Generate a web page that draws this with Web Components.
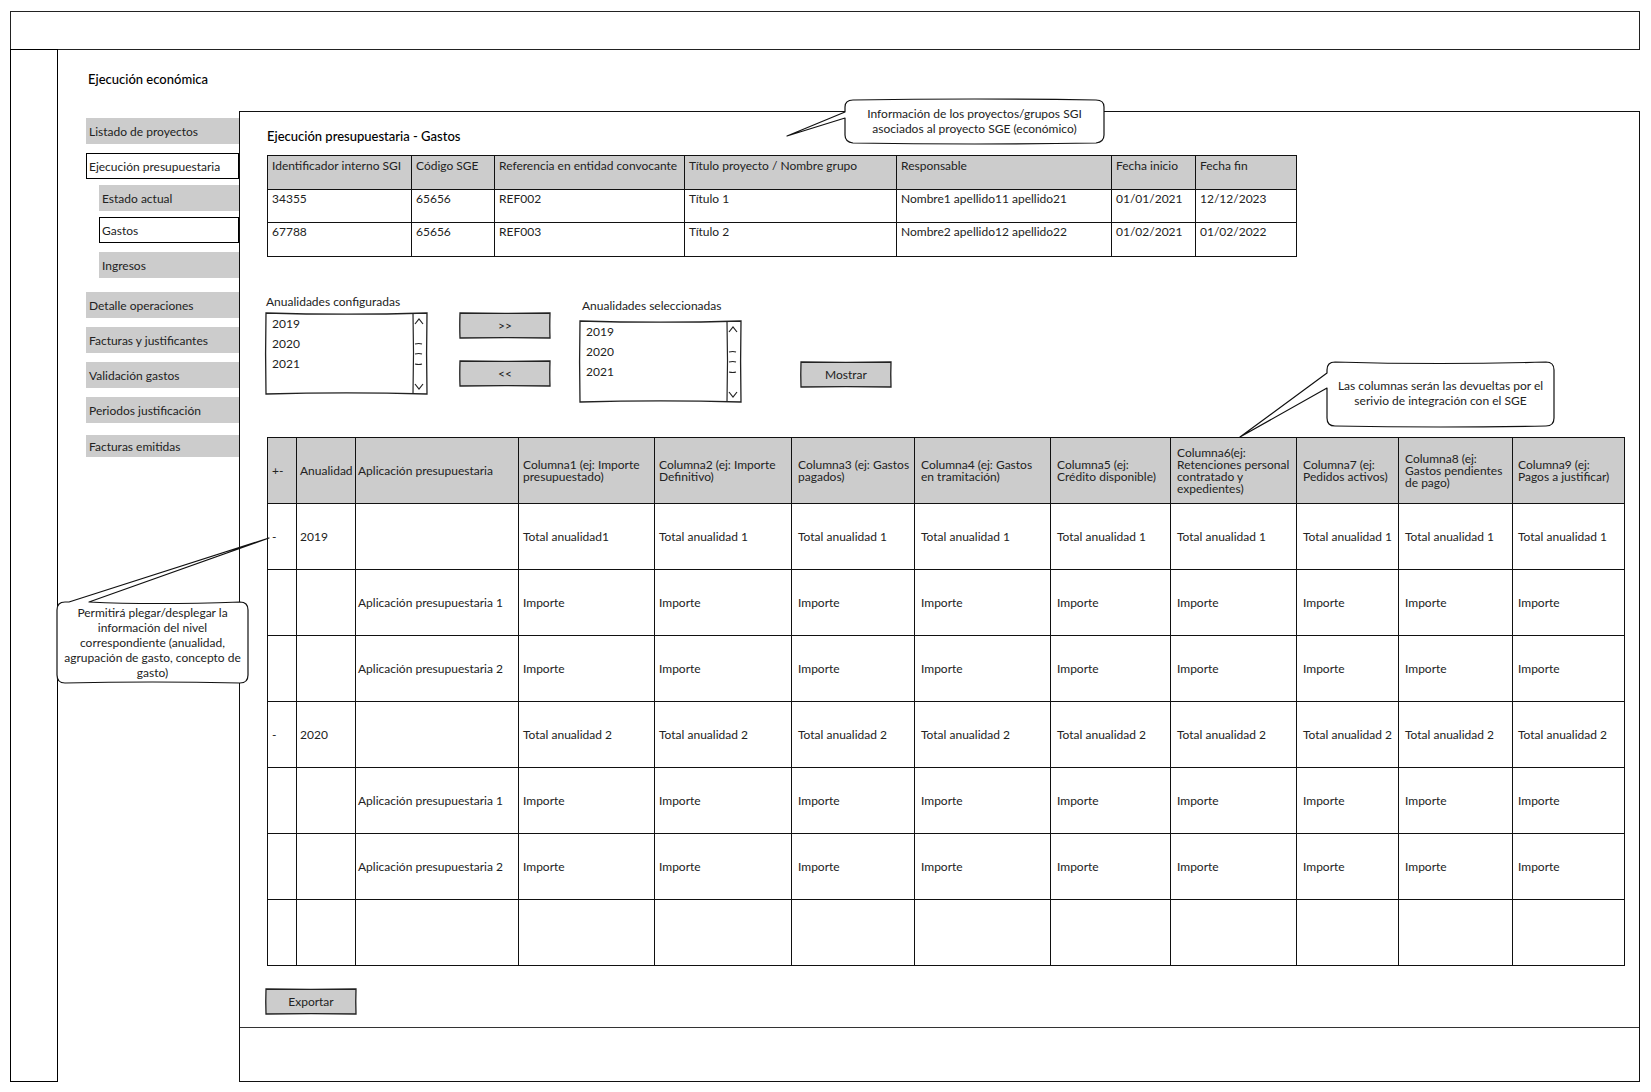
<!DOCTYPE html>
<html lang="es">
<head>
<meta charset="utf-8">
<title>Ejecución económica</title>
<style>
body{margin:0;background:#fff;color:#222;font:12px/15px Lato,"Liberation Sans",sans-serif}
</style>
</head>
<body>
<economic-app></economic-app>
<script>
const define=(name,html,setup)=>customElements.define(name,class extends HTMLElement{
  constructor(){super();this.attachShadow({mode:'open'}).innerHTML='<style>*,:host{box-sizing:border-box}</style>'+html;}
  connectedCallback(){if(setup)setup(this,this.shadowRoot);}
});

/* Hand-drawn frame whose top and bottom edges sag slightly */
const sketchFrame=`<svg class="frame" viewBox="0 0 100 100" preserveAspectRatio="none" aria-hidden="true"><path d="M0 0Q50 3 100 0Q99.5 50 100 100Q50 97 0 100Q-.5 50 0 0Z" vector-effect="non-scaling-stroke"/></svg>`;
const frameCss=`.frame{position:absolute;inset:0;width:100%;height:100%;overflow:visible;z-index:-1}.frame path{fill:var(--fill,#fff);stroke:#222;stroke-width:1.3}`;

define('sketch-button',`<style>
:host{display:block;width:90px;height:25px}
button{position:relative;z-index:0;width:100%;height:100%;border:0;padding:0;background:none;font:inherit;color:inherit;--fill:#ccc}
${frameCss}</style><button type="button">${sketchFrame}<slot></slot></button>`);

define('year-list',`<style>
:host{display:block;width:161px}
label{display:block;line-height:16px;margin-bottom:var(--label-gap,3px);padding-left:var(--label-inset,0)}
.box{position:relative;z-index:0;display:flex;height:81px}
select{flex:1;min-width:0;border:0;outline:0;padding:3px 0 0;background:none;font:inherit;color:inherit;overflow:hidden;scrollbar-width:none;appearance:none}
select::-webkit-scrollbar{display:none}
option{height:20px;line-height:20px;min-height:20px;padding:0 0 0 6px}
.bar{width:14px;height:81px;flex:none;overflow:visible}
.bar path{fill:none;stroke:#222;stroke-width:1.2}
${frameCss}</style>
<label for="years"></label>
<div class="box">${sketchFrame}<select id="years" multiple size="3"><option>2019</option><option>2020</option><option>2021</option></select>
<svg class="bar" viewBox="0 0 14 81" aria-hidden="true"><path d="M0 0Q1 40 0 81M2 11L6 6L10 11M2 31Q6 30 9 31M2 41Q6 40 9 41M2 51Q6 52 9 51M2 71L6 76L10 71"/></svg></div>`,
(h,r)=>{r.querySelector('label').textContent=h.getAttribute('label');});

define('nav-item',`<style>
:host{display:block}
a{display:flex;align-items:center;height:var(--h,26px);padding-left:3px;background:#ccc;color:inherit;text-decoration:none}
:host([current]) a{background:#fff;border:1px solid #000}
:host([current]) a{padding-left:2px}
:host([short]){--h:22px}
</style><a href="#"><slot></slot></a>`);

define('side-nav',`<style>
:host{display:block;padding-left:28px}
h1{margin:0;height:18px;font-size:13px;line-height:18px;font-weight:500;padding-left:2px;color:#000}
nav{display:flex;flex-direction:column;gap:9px;margin-top:30px}
.sub{display:flex;flex-direction:column;gap:6px;padding-left:13px;margin:-3px 0 5px}
.later{margin-top:3px}
</style><h1>Ejecución económica</h1>
<nav>
<nav-item>Listado de proyectos</nav-item>
<nav-item current>Ejecución presupuestaria</nav-item>
<div class="sub"><nav-item>Estado actual</nav-item><nav-item current>Gastos</nav-item><nav-item class="later">Ingresos</nav-item></div>
<nav-item>Detalle operaciones</nav-item>
<nav-item>Facturas y justificantes</nav-item>
<nav-item>Validación gastos</nav-item>
<nav-item>Periodos justificación</nav-item>
<nav-item class="later" short>Facturas emitidas</nav-item>
</nav>`);

const tableCss=`table{border-collapse:collapse;table-layout:fixed;width:100%}
th,td{border:1px solid #111;text-align:left;font-weight:400}th{background:#ccc}`;
const row=(cells,tag='td')=>'<tr>'+cells.map(c=>`<${tag}>${c}</${tag}>`).join('')+'</tr>';
const cols=w=>'<colgroup>'+w.map(x=>`<col style="width:${x}px">`).join('')+'</colgroup>';

define('projects-table',`<style>:host{display:block;max-width:1030px}
${tableCss}
tr{height:33px}thead tr,tr:last-child{height:34px}
th,td{padding:3px 0 0 4px;vertical-align:top;line-height:14px;white-space:nowrap}
td{padding-top:2px}
</style><table>${cols([144,83,190,212,215,84,101])}<thead>
${row(['Identificador interno SGI','Código SGE','Referencia en entidad convocante','Título proyecto / Nombre grupo','Responsable','Fecha inicio','Fecha fin'],'th')}</thead><tbody>
${row(['34355','65656','REF002','Título 1','Nombre1 apellido11 apellido21','01/01/2021','12/12/2023'])}
${row(['67788','65656','REF003','Título 2','Nombre2 apellido12 apellido22','01/02/2021','01/02/2022'])}</tbody></table>`);

const totals=n=>Array.from({length:9},(_,i)=>n==1&&i==0?'Total anualidad1':'Total anualidad '+n);
const amounts=Array(9).fill('Importe');
const year=(y,n)=>row(['-',y,'',...totals(n)])+row(['','','Aplicación presupuestaria 1',...amounts])+row(['','','Aplicación presupuestaria 2',...amounts]);
define('expenses-table',`<style>:host{display:block}
${tableCss}
tr{height:66px}
th,td{padding:0 0 0 4px;vertical-align:middle;line-height:12px}
tr>:nth-child(2){padding-left:3px}
tr>:nth-child(3){padding-left:2px}
tr>:nth-child(n+6){padding-left:6px}
tr>:last-child{padding-left:5px}
td,tr>:nth-child(2),tr>:nth-child(3){white-space:nowrap}
</style><table>${cols([29,59,163,136,137,123,136,120,126,102,114,112])}<thead>
${row(['+-','Anualidad','Aplicación presupuestaria','Columna1 (ej: Importe<br>presupuestado)','Columna2 (ej: Importe<br>Definitivo)','Columna3 (ej: Gastos<br>pagados)','Columna4 (ej: Gastos<br>en tramitación)','Columna5 (ej:<br>Crédito disponible)','Columna6(ej:<br>Retenciones personal<br>contratado y<br>expedientes)','Columna7 (ej:<br>Pedidos activos)','Columna8 (ej:<br>Gastos pendientes<br>de pago)','Columna9 (ej:<br>Pagos a justificar)'],'th')}</thead><tbody>
${year('2019',1)}${year('2020',2)}${row(Array(12).fill(''))}</tbody></table>`);

/* Speech bubble: the outline includes its tail, drawn from the given path */
define('call-out',`<style>
:host{position:absolute;display:flex;align-items:center;justify-content:center;text-align:center;line-height:15px}
svg{position:absolute;left:0;top:0;width:100%;height:100%;overflow:visible;z-index:-1}
path{fill:#fff;stroke:#111;stroke-width:1.2;stroke-linejoin:round}
</style><svg aria-hidden="true"><path/></svg><span><slot></slot></span>`,
(h,r)=>{r.querySelector('path').setAttribute('d',h.getAttribute('outline'));});

define('expense-panel',`<style>
:host{display:flex;flex-direction:column;border:1px solid #111;background:#fff}
.body{flex:1;padding:15px 16px 13px 27px}
h2{margin:0 0 10px;font-size:13px;line-height:18px;font-weight:500;color:#000}
.filters{display:flex;align-items:flex-start;margin:37px 0 35px -1px}
.move{display:flex;flex-direction:column;gap:23px;margin:19px 30px 0 33px}
.second{margin-top:4px;--label-gap:7px;--label-inset:2px}
.show{margin:68px 0 0 60px}
.export{margin:23px 0 0 -1px}
footer{height:54px;border-top:1px solid #333}
</style>
<div class="body">
<h2>Ejecución presupuestaria - Gastos</h2>
<projects-table></projects-table>
<div class="filters">
<year-list label="Anualidades configuradas"></year-list>
<div class="move"><sketch-button>&gt;&gt;</sketch-button><sketch-button>&lt;&lt;</sketch-button></div>
<year-list class="second" label="Anualidades seleccionadas"></year-list>
<sketch-button class="show">Mostrar</sketch-button>
</div>
<expenses-table></expenses-table>
<sketch-button class="export">Exportar</sketch-button>
</div>
<footer></footer>`);

define('economic-app',`<style>
:host{position:relative;z-index:0;display:flex;flex-direction:column;min-height:100vh;padding:11px 11px 11px 10px}
header{height:39px;border:1px solid #222}
.page{flex:1;display:flex;margin-top:-1px}
aside{width:48px;border:1px solid #000}
side-nav{width:181px;padding-top:21px}
expense-panel{flex:1;min-width:0;margin-top:62px}
call-out{z-index:1}
.projects{left:845px;top:99px;width:259px;height:44px}
.columns{left:1327px;top:362px;width:227px;height:62px}
.fold{left:57px;top:602px;width:191px;height:81px}
</style>
<header></header>
<div class="page"><aside></aside><side-nav></side-nav><expense-panel></expense-panel></div>
<call-out class="projects" outline="M0 13V8Q0 1 8 1Q130 -1 251 1Q259 1 259 8V36Q259 43 251 44Q130 46 8 44Q0 43 0 36V19L-58 37Z">Información de los proyectos/grupos SGI<br>asociados al proyecto SGE (económico)</call-out>
<call-out class="columns" outline="M0 11V8Q0 0 8 0Q113 3 219 0Q227 0 227 8V56Q227 64 219 64Q113 66 8 64Q0 64 0 56V26L-87 75Z">Las columnas serán las devueltas por el<br>serivio de integración con el SGE</call-out>
<call-out class="fold" outline="M12 0H8Q0 0 0 8V73Q0 81 8 81Q95 79 183 81Q191 81 191 73V8Q191 0 183 0Q95 3 32 0L212 -64Z">Permitirá plegar/desplegar la<br>información del nivel<br>correspondiente (anualidad,<br>agrupación de gasto, concepto de<br>gasto)</call-out>`);
</script>
</body>
</html>
